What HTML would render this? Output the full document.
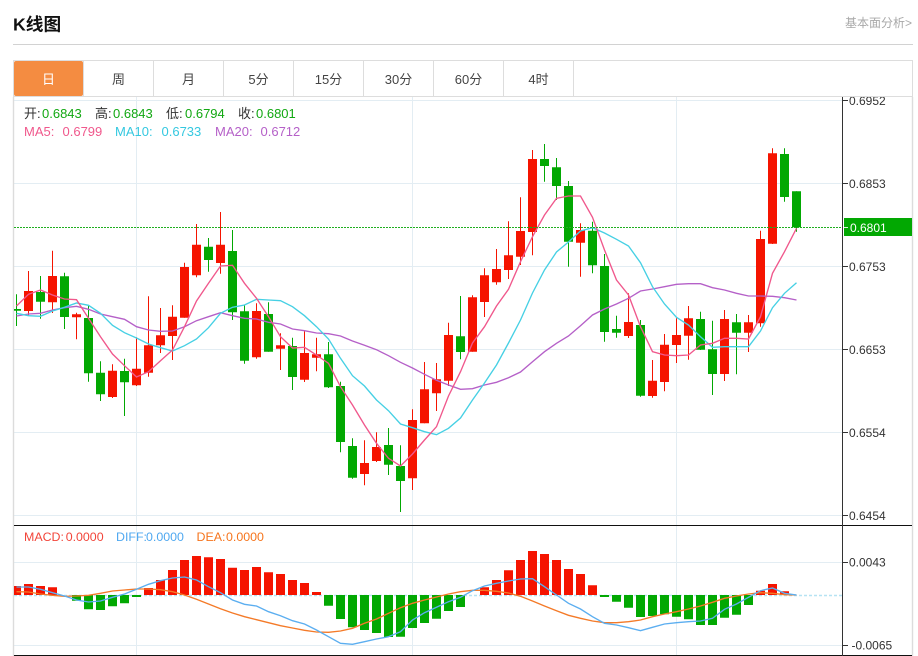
<!DOCTYPE html>
<html><head><meta charset="utf-8"><style>
html,body{margin:0;padding:0;background:#fff;width:918px;height:656px;overflow:hidden}
svg{display:block}
text{font-family:"Liberation Sans","Noto Sans CJK SC",sans-serif}
</style></head><body>
<svg width="918" height="656" viewBox="0 0 918 656" xmlns="http://www.w3.org/2000/svg">
<defs><clipPath id="c"><rect x="14" y="97" width="829" height="558"/></clipPath></defs>
<rect width="918" height="656" fill="#fff"/>
<!-- grid -->
<path d="M14 100.5H843M14 183.5H843M14 266.5H843M14 349.5H843M14 432.5H843M14 515.5H843M14 562.5H843M14 645.5H843M136.5 97V525M412.5 97V525M676.5 97V525M136.5 526V655M412.5 526V655M676.5 526V655" stroke="#e3edf3" stroke-width="1" fill="none"/>
<path d="M13.5 97V656M912.5 97V656" stroke="#dcdcdc" stroke-width="1.4" fill="none"/>
<g clip-path="url(#c)">
<!-- red wicks -->
<path stroke="#f51400" stroke-width="1" fill="none" d="M28.5 271V315.7M52.5 250.7V313M76.5 312.7V339.3M112.5 364.3V398M136.5 337.3V386M148.5 296.3V376.7M160.5 308V353M172.5 305.3V360M184.5 262.7V317.7M196.5 224V277.3M220.5 212V273.7M256.5 303.3V358.7M280.5 333.3V370M304.5 331.3V382M316.5 337.7V371.3M364.5 440.3V485.3M376.5 432.3V462M412.5 409.3V490M424.5 362V423.3M436.5 363V411M448.5 322.7V386M472.5 295.3V351.7M484.5 268.3V317M496.5 249V284.7M508.5 221.3V279M520.5 197.3V265M532.5 150V255.3M580.5 223.3V276.7M628.5 293.3V338M652.5 360V397.7M664.5 334V391.3M676.5 318.3V363M688.5 306V359.7M724.5 310V381M748.5 315V352M760.5 230.7V326.7M772.5 148.3V244"/>
<!-- red bodies -->
<path stroke="#f51400" stroke-width="9" fill="none" d="M28.5 291V311M52.5 276V302.3M76.5 314.3V317.3M112.5 370.7V397M136.5 368.7V385.3M148.5 345.3V372.7M160.5 335.3V345.3M172.5 316.7V336M184.5 267V317.7M196.5 244.7V275.3M220.5 244.7V263M256.5 311V357.3M280.5 345.3V348.7M304.5 353V379.7M316.5 354.3V357.7M364.5 463V474M376.5 447V461M412.5 420V478.3M424.5 389.3V423.3M436.5 379.3V393.3M448.5 335V380.7M472.5 297.3V351.7M484.5 275.3V302M496.5 269V282.3M508.5 255.3V270M520.5 231V256.7M532.5 159V232M580.5 230V242.7M628.5 322V336M652.5 380.7V396M664.5 344.7V382M676.5 335V345M688.5 318.3V335.7M724.5 319V374M748.5 322.3V332.7M760.5 239V323.3M772.5 153.3V243.7"/>
<!-- green wicks -->
<path stroke="#02a802" stroke-width="1" fill="none" d="M16.5 294.3V326M40.5 276V318.7M64.5 272.7V329M88.5 306V381.7M100.5 361.3V401M124.5 358.7V416M208.5 238V271.7M232.5 230V320M244.5 305V363.7M268.5 302.3V351.7M292.5 337.7V390M328.5 342V388M340.5 381.7V452.3M352.5 438.3V478.7M388.5 428V475M400.5 445.3V512M460.5 296V359.3M544.5 144V181.7M556.5 158V200M568.5 181V266.7M592.5 221.7V273.3M604.5 254V341.7M616.5 315.7V337.7M640.5 320V396.7M700.5 311.7V350M712.5 320.7V395M736.5 314V374.3M784.5 148.3V201.7M796.5 191.3V231.7"/>
<!-- green bodies -->
<path stroke="#02a802" stroke-width="9" fill="none" d="M16.5 309V310.7M40.5 292V301.7M64.5 276.3V317M88.5 318V373.3M100.5 372.7V394.3M124.5 371V382.3M208.5 246.7V260M232.5 251V312.3M244.5 311.3V360.7M268.5 314V351.7M292.5 346V377M328.5 354.3V387.3M340.5 386V442M352.5 446V477.7M388.5 445V464.7M400.5 466V481M460.5 336.3V352M544.5 159V166M556.5 167.3V186M568.5 186V241.7M592.5 230.7V265.3M604.5 266V332M616.5 329V332.7M640.5 325V395.7M700.5 319V349.7M712.5 349.3V374M736.5 322.3V332.7M784.5 154V197M796.5 191.3V227.3"/>
<!-- MA20 -->
<polyline fill="none" stroke="#b560c8" stroke-width="1.35" points="16.5,316 28.5,314 40.5,313.3 52.5,310 64.5,307.7 76.5,306.3 88.5,309.3 100.5,314 112.5,316.7 124.5,319.3 136.5,326.7 148.5,330 160.5,331.3 172.5,331 184.5,326.7 196.5,320.7 208.5,316.7 220.5,312.7 232.5,315.7 244.5,318.3 256.5,319 268.5,322.3 280.5,324 292.5,329 304.5,330.7 316.5,333 328.5,333.7 340.5,336 352.5,341 364.5,345.3 376.5,349.7 388.5,355.7 400.5,362.3 412.5,368 424.5,374.3 436.5,380.3 448.5,385 460.5,389.3 472.5,388.7 484.5,385 496.5,382.3 508.5,377.7 520.5,372 532.5,361.7 544.5,351.7 556.5,343.3 568.5,336 580.5,325.7 592.5,315 604.5,309 616.5,304 628.5,298.3 640.5,291 652.5,289 664.5,286.7 676.5,284.3 688.5,283.7 700.5,283.7 712.5,287.7 724.5,290 736.5,293.3 748.5,296 760.5,296 772.5,296.3 784.5,297.7 796.5,300"/>
<!-- MA10 -->
<polyline fill="none" stroke="#46d0e4" stroke-width="1.35" points="16.5,313.3 28.5,315.7 40.5,316.3 52.5,311 64.5,307.3 76.5,303 88.5,305.3 100.5,313.3 112.5,325.3 124.5,332.7 136.5,338 148.5,344 160.5,347.7 172.5,351 184.5,345.7 196.5,339 208.5,327.7 220.5,313.3 232.5,307.3 244.5,305 256.5,299.3 268.5,300 280.5,300.7 292.5,306.7 304.5,315.7 316.5,326.7 328.5,339 340.5,358.3 352.5,375.7 364.5,386 376.5,400 388.5,410.7 400.5,424 412.5,427.7 424.5,431.7 436.5,434.7 448.5,428.3 460.5,418 472.5,400 484.5,383 496.5,365 508.5,343 520.5,320 532.5,293 544.5,270 556.5,252 568.5,242 580.5,231 592.5,227.7 604.5,233 616.5,239.3 628.5,246 640.5,262.7 652.5,286.7 664.5,304 676.5,317.3 688.5,325 700.5,336.7 712.5,347.3 724.5,346.7 736.5,346.7 748.5,346.7 760.5,331 772.5,307.7 784.5,293.3 796.5,282.7"/>
<!-- MA5 -->
<polyline fill="none" stroke="#f0588c" stroke-width="1.35" points="16.5,306 28.5,294.3 40.5,290 52.5,295 64.5,299 76.5,299.7 88.5,318.3 100.5,336.7 112.5,354 124.5,365.7 136.5,377 148.5,371.7 160.5,360.7 172.5,350 184.5,326.7 196.5,301 208.5,283.3 220.5,266 232.5,265.3 244.5,283.3 256.5,298.3 268.5,316.7 280.5,336.7 292.5,348 304.5,347.3 316.5,355 328.5,363.3 340.5,386.7 352.5,405 364.5,425 376.5,443.3 388.5,458.3 400.5,466 412.5,454 424.5,440 436.5,426.7 448.5,396 460.5,371.7 472.5,343 484.5,326.7 496.5,306 508.5,289.3 520.5,261.7 532.5,236.7 544.5,215 556.5,198.3 568.5,196 580.5,196 592.5,217.3 604.5,250 616.5,280 628.5,295 640.5,326.7 652.5,351.7 664.5,355 676.5,355.7 688.5,355 700.5,345 712.5,343.3 724.5,338.3 736.5,338.3 748.5,339 760.5,316.7 772.5,273.3 784.5,251.7 796.5,228.3"/>
<!-- current price line -->
<path d="M14 227.5H843" stroke="#1fae1f" stroke-width="1" stroke-dasharray="2 1" fill="none"/>
<!-- MACD zero -->
<path d="M14 595.5H843" stroke="#b6e3f3" stroke-width="1.5" stroke-dasharray="3 2" fill="none"/>
<!-- MACD red -->
<path stroke="#f51400" stroke-width="9" fill="none" d="M16.5 586V595M28.5 584V595M40.5 586V595M52.5 587.3V595M148.5 588V595M160.5 580V595M172.5 570V595M184.5 560V595M196.5 556V595M208.5 557.3V595M220.5 559V595M232.5 567.7V595M244.5 570V595M256.5 567V595M268.5 572.3V595M280.5 574V595M292.5 580V595M304.5 583V595M316.5 592V595M484.5 587.3V595M496.5 580V595M508.5 570.3V595M520.5 560V595M532.5 551V595M544.5 554V595M556.5 560V595M568.5 569V595M580.5 574V595M592.5 585.3V595M760.5 590.7V595M772.5 584V595M784.5 591.3V595"/>
<!-- MACD green -->
<path stroke="#02a802" stroke-width="9" fill="none" d="M76.5 595V600.7M88.5 595V609.3M100.5 595V610M112.5 595V606.3M124.5 595V603.3M136.5 595V597M328.5 595V605.7M340.5 595V619M352.5 595V627.3M364.5 595V630M376.5 595V633M388.5 595V637M400.5 595V636.7M412.5 595V628M424.5 595V623M436.5 595V618.7M448.5 595V611M460.5 595V607M604.5 595V597M616.5 595V601.7M628.5 595V607.7M640.5 595V617M652.5 595V616M664.5 595V614.3M676.5 595V616.7M688.5 595V619.3M700.5 595V625M712.5 595V625M724.5 595V617.7M736.5 595V614.7M748.5 595V605"/>
<!-- DEA -->
<polyline fill="none" stroke="#f47a28" stroke-width="1.35" points="16.5,591.7 28.5,592 40.5,594 52.5,595.3 64.5,596.3 76.5,596 88.5,595.3 100.5,593.3 112.5,591 124.5,590 136.5,589 148.5,589 160.5,589.7 172.5,591.7 184.5,595 196.5,599.3 208.5,604 220.5,608.7 232.5,613 244.5,616.7 256.5,619.7 268.5,622.7 280.5,625.7 292.5,628 304.5,630.3 316.5,632 328.5,632.3 340.5,631 352.5,628.3 364.5,623.3 376.5,619 388.5,613.3 400.5,607.7 412.5,603.3 424.5,600 436.5,597 448.5,594 460.5,591.7 472.5,590.3 484.5,590.3 496.5,591.3 508.5,593 520.5,596.3 532.5,601 544.5,606 556.5,610.7 568.5,615.3 580.5,618.3 592.5,621 604.5,622.7 616.5,622.7 628.5,621.7 640.5,620 652.5,616.7 664.5,614 676.5,611.7 688.5,609 700.5,606 712.5,602.3 724.5,598.3 736.5,596 748.5,594 760.5,592.7 772.5,593.3 784.5,594.7 796.5,595"/>
<!-- DIFF -->
<polyline fill="none" stroke="#5baef0" stroke-width="1.35" points="16.5,587 28.5,587 40.5,589.3 52.5,592.7 64.5,596 76.5,600 88.5,602 100.5,601 112.5,597.3 124.5,594 136.5,589.3 148.5,584.3 160.5,580.7 172.5,578 184.5,577 196.5,580 208.5,586.7 220.5,592.7 232.5,600 244.5,604.3 256.5,606 268.5,611.7 280.5,615.7 292.5,620.7 304.5,624 316.5,630 328.5,636.7 340.5,643.3 352.5,644.3 364.5,641.7 376.5,639 388.5,636.7 400.5,631.7 412.5,620 424.5,612.7 436.5,607.3 448.5,601.7 460.5,597.3 472.5,590.7 484.5,586 496.5,583.3 508.5,581 520.5,579 532.5,578.7 544.5,586.7 556.5,595 568.5,603.3 580.5,609 592.5,616.7 604.5,623.3 616.5,625 628.5,627.7 640.5,630.7 652.5,627.3 664.5,624 676.5,622.7 688.5,621.7 700.5,621 712.5,618.3 724.5,609.3 736.5,604 748.5,597.3 760.5,590.7 772.5,588 784.5,593.3 796.5,595"/>
</g>
<!-- separators -->
<path d="M14 525.5H912M14 655.5H912" stroke="#111" stroke-width="1" fill="none"/>
<!-- axis -->
<path d="M842.5 97V656M843 100.5H848M843 183.5H848M843 266.5H848M843 349.5H848M843 432.5H848M843 515.5H848M843 562.5H848M843 645.5H848" stroke="#333" stroke-width="1" fill="none"/>
<g font-size="12" fill="#333">
<text x="849" y="105">0.6952</text>
<text x="849" y="188">0.6853</text>
<text x="849" y="271">0.6753</text>
<text x="849" y="354">0.6653</text>
<text x="849" y="437">0.6554</text>
<text x="849" y="520">0.6454</text>
<text x="849" y="566.5">0.0043</text>
<text x="851.5" y="649.5">-0.0065</text>
</g>
<rect x="844" y="218" width="68" height="18" fill="#02a802"/>
<path d="M844 227.5H848" stroke="#dff2df" stroke-width="1"/>
<text x="850" y="232" font-size="12" fill="#fff">0.6801</text>
<!-- header -->
<rect x="0" y="0" width="918" height="97" fill="#fff"/>
<text x="13" y="30.5" font-size="17.7" font-weight="700" fill="#111">K线图</text>
<text x="912" y="27" font-size="12" fill="#a8a8a8" text-anchor="end">基本面分析&gt;</text>
<path d="M13 44.5H913" stroke="#d2d2d2" stroke-width="1"/>
<!-- tabs -->
<rect x="13.5" y="60.5" width="899" height="36" fill="#fff" stroke="#dddddd" stroke-width="1"/>
<path d="M83.5 61V96M153.5 61V96M223.5 61V96M293.5 61V96M363.5 61V96M433.5 61V96M503.5 61V96M573.5 61V96" stroke="#dddddd" stroke-width="1"/>
<rect x="14" y="61" width="69" height="35" rx="2" fill="#f48c41"/>
<g font-size="13" fill="#444" text-anchor="middle">
<text x="48.5" y="84" fill="#fff">日</text>
<text x="118.5" y="84">周</text>
<text x="188.5" y="84">月</text>
<text x="258.5" y="84">5分</text>
<text x="328.5" y="84">15分</text>
<text x="398.5" y="84">30分</text>
<text x="468.5" y="84">60分</text>
<text x="538.5" y="84">4时</text>
</g>
<!-- legend -->
<g font-size="13">
<text x="24" y="118" fill="#333">开:</text><text x="42" y="118" fill="#12a812">0.6843</text>
<text x="95" y="118" fill="#333">高:</text><text x="113" y="118" fill="#12a812">0.6843</text>
<text x="166" y="118" fill="#333">低:</text><text x="185" y="118" fill="#12a812">0.6794</text>
<text x="238" y="118" fill="#333">收:</text><text x="256" y="118" fill="#12a812">0.6801</text>
<text x="24" y="136" fill="#f0588c">MA5:</text><text x="62.5" y="136" fill="#f0588c">0.6799</text>
<text x="115" y="136" fill="#34c8e0">MA10:</text><text x="161.5" y="136" fill="#34c8e0">0.6733</text>
<text x="215" y="136" fill="#b560c8">MA20:</text><text x="260.5" y="136" fill="#b560c8">0.6712</text>
</g>
<g font-size="12.4">
<text x="24" y="541" fill="#f2453a">MACD:</text><text x="65.7" y="541" fill="#f2453a">0.0000</text>
<text x="116" y="541" fill="#4fa8f0">DIFF:</text><text x="146" y="541" fill="#4fa8f0">0.0000</text>
<text x="196.5" y="541" fill="#f6741c">DEA:</text><text x="226" y="541" fill="#f6741c">0.0000</text>
</g>
</svg>
</body></html>
